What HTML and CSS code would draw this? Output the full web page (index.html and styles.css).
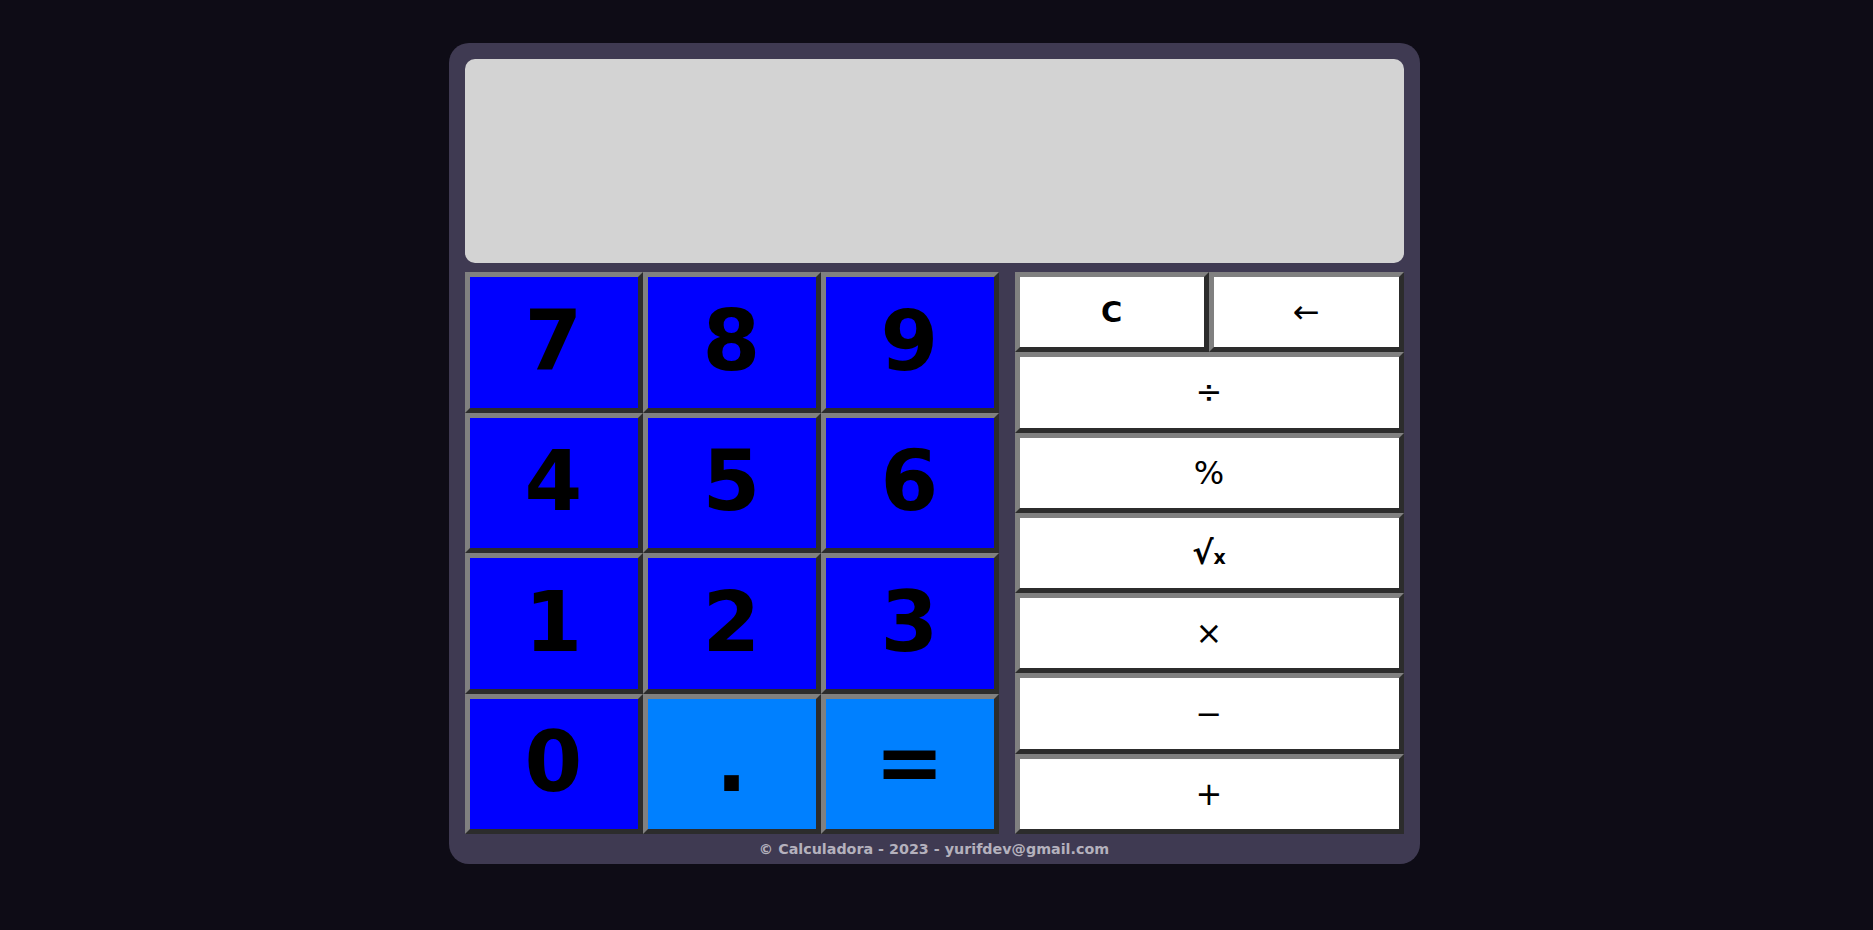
FILE: index.html
```html
<!DOCTYPE html>
<html lang="pt-BR">
<head>
<meta charset="utf-8">
<title>Calculadora</title>
<link rel="stylesheet" href="styles.css">
</head>
<body>
<main class="calc">
  <div class="display"></div>
  <div class="keys">
    <div class="nums">
      <button class="key num">7</button>
      <button class="key num">8</button>
      <button class="key num">9</button>
      <button class="key num">4</button>
      <button class="key num">5</button>
      <button class="key num">6</button>
      <button class="key num">1</button>
      <button class="key num">2</button>
      <button class="key num">3</button>
      <button class="key num">0</button>
      <button class="key num alt">.</button>
      <button class="key num alt">=</button>
    </div>
    <div class="ops">
      <button class="key op clear">C</button>
      <button class="key op">←</button>
      <button class="key op wide">÷</button>
      <button class="key op wide">%</button>
      <button class="key op wide"><span class="root">√<span class="sm">x</span></span></button>
      <button class="key op wide">×</button>
      <button class="key op wide">−</button>
      <button class="key op wide">+</button>
    </div>
  </div>
  <footer class="foot">© Calculadora - 2023 - yurifdev@gmail.com</footer>
</main>
</body>
</html>
```

FILE: styles.css
```css
html, body {
  margin: 0;
  padding: 0;
  background: #0e0c16;
  font-family: "DejaVu Sans", "Liberation Sans", sans-serif;
}

.calc {
  box-sizing: border-box;
  width: 971px;
  margin: 43px 0 0 calc(50% - 488px);
  padding: 16px 16px 0;
  background: #3f3a52;
  border-radius: 20px;
}

.display {
  height: 204px;
  background: #d3d3d3;
  border-radius: 10px;
}

.keys {
  margin-top: 9px;
  display: flex;
  gap: 16px;
  height: 562px;
}

.key {
  box-sizing: border-box;
  margin: 0;
  padding: 0;
  border-style: solid;
  border-width: 5px;
  border-color: #808080 #2c2c2c #2c2c2c #808080;
  color: #000;
  font-family: "DejaVu Sans", "Liberation Sans", sans-serif;
  display: flex;
  align-items: center;
  justify-content: center;
  cursor: pointer;
}

.nums {
  width: 534px;
  display: grid;
  grid-template-columns: repeat(3, 1fr);
  grid-template-rows: repeat(4, 1fr);
}

.num {
  background: #0000ff;
  font-size: 83px;
  font-weight: bold;
  line-height: 1;
  padding-bottom: 2px;
}

.num.alt {
  background: #0080ff;
}

.ops {
  width: 389px;
  display: grid;
  grid-template-columns: repeat(2, 1fr);
  grid-template-rows: repeat(7, 1fr);
}

.op {
  background: #ffffff;
  font-size: 32px;
  line-height: 1;
}

.op.wide {
  grid-column: span 2;
}

.op.clear {
  font-size: 29px;
  font-weight: bold;
}

.root {
  font-weight: bold;
}

.sm {
  font-size: 19px;
  font-weight: bold;
}

.foot {
  height: 30px;
  line-height: 30px;
  text-align: center;
  color: #b4b1bd;
  font-size: 14.3px;
  font-weight: bold;
}
```
